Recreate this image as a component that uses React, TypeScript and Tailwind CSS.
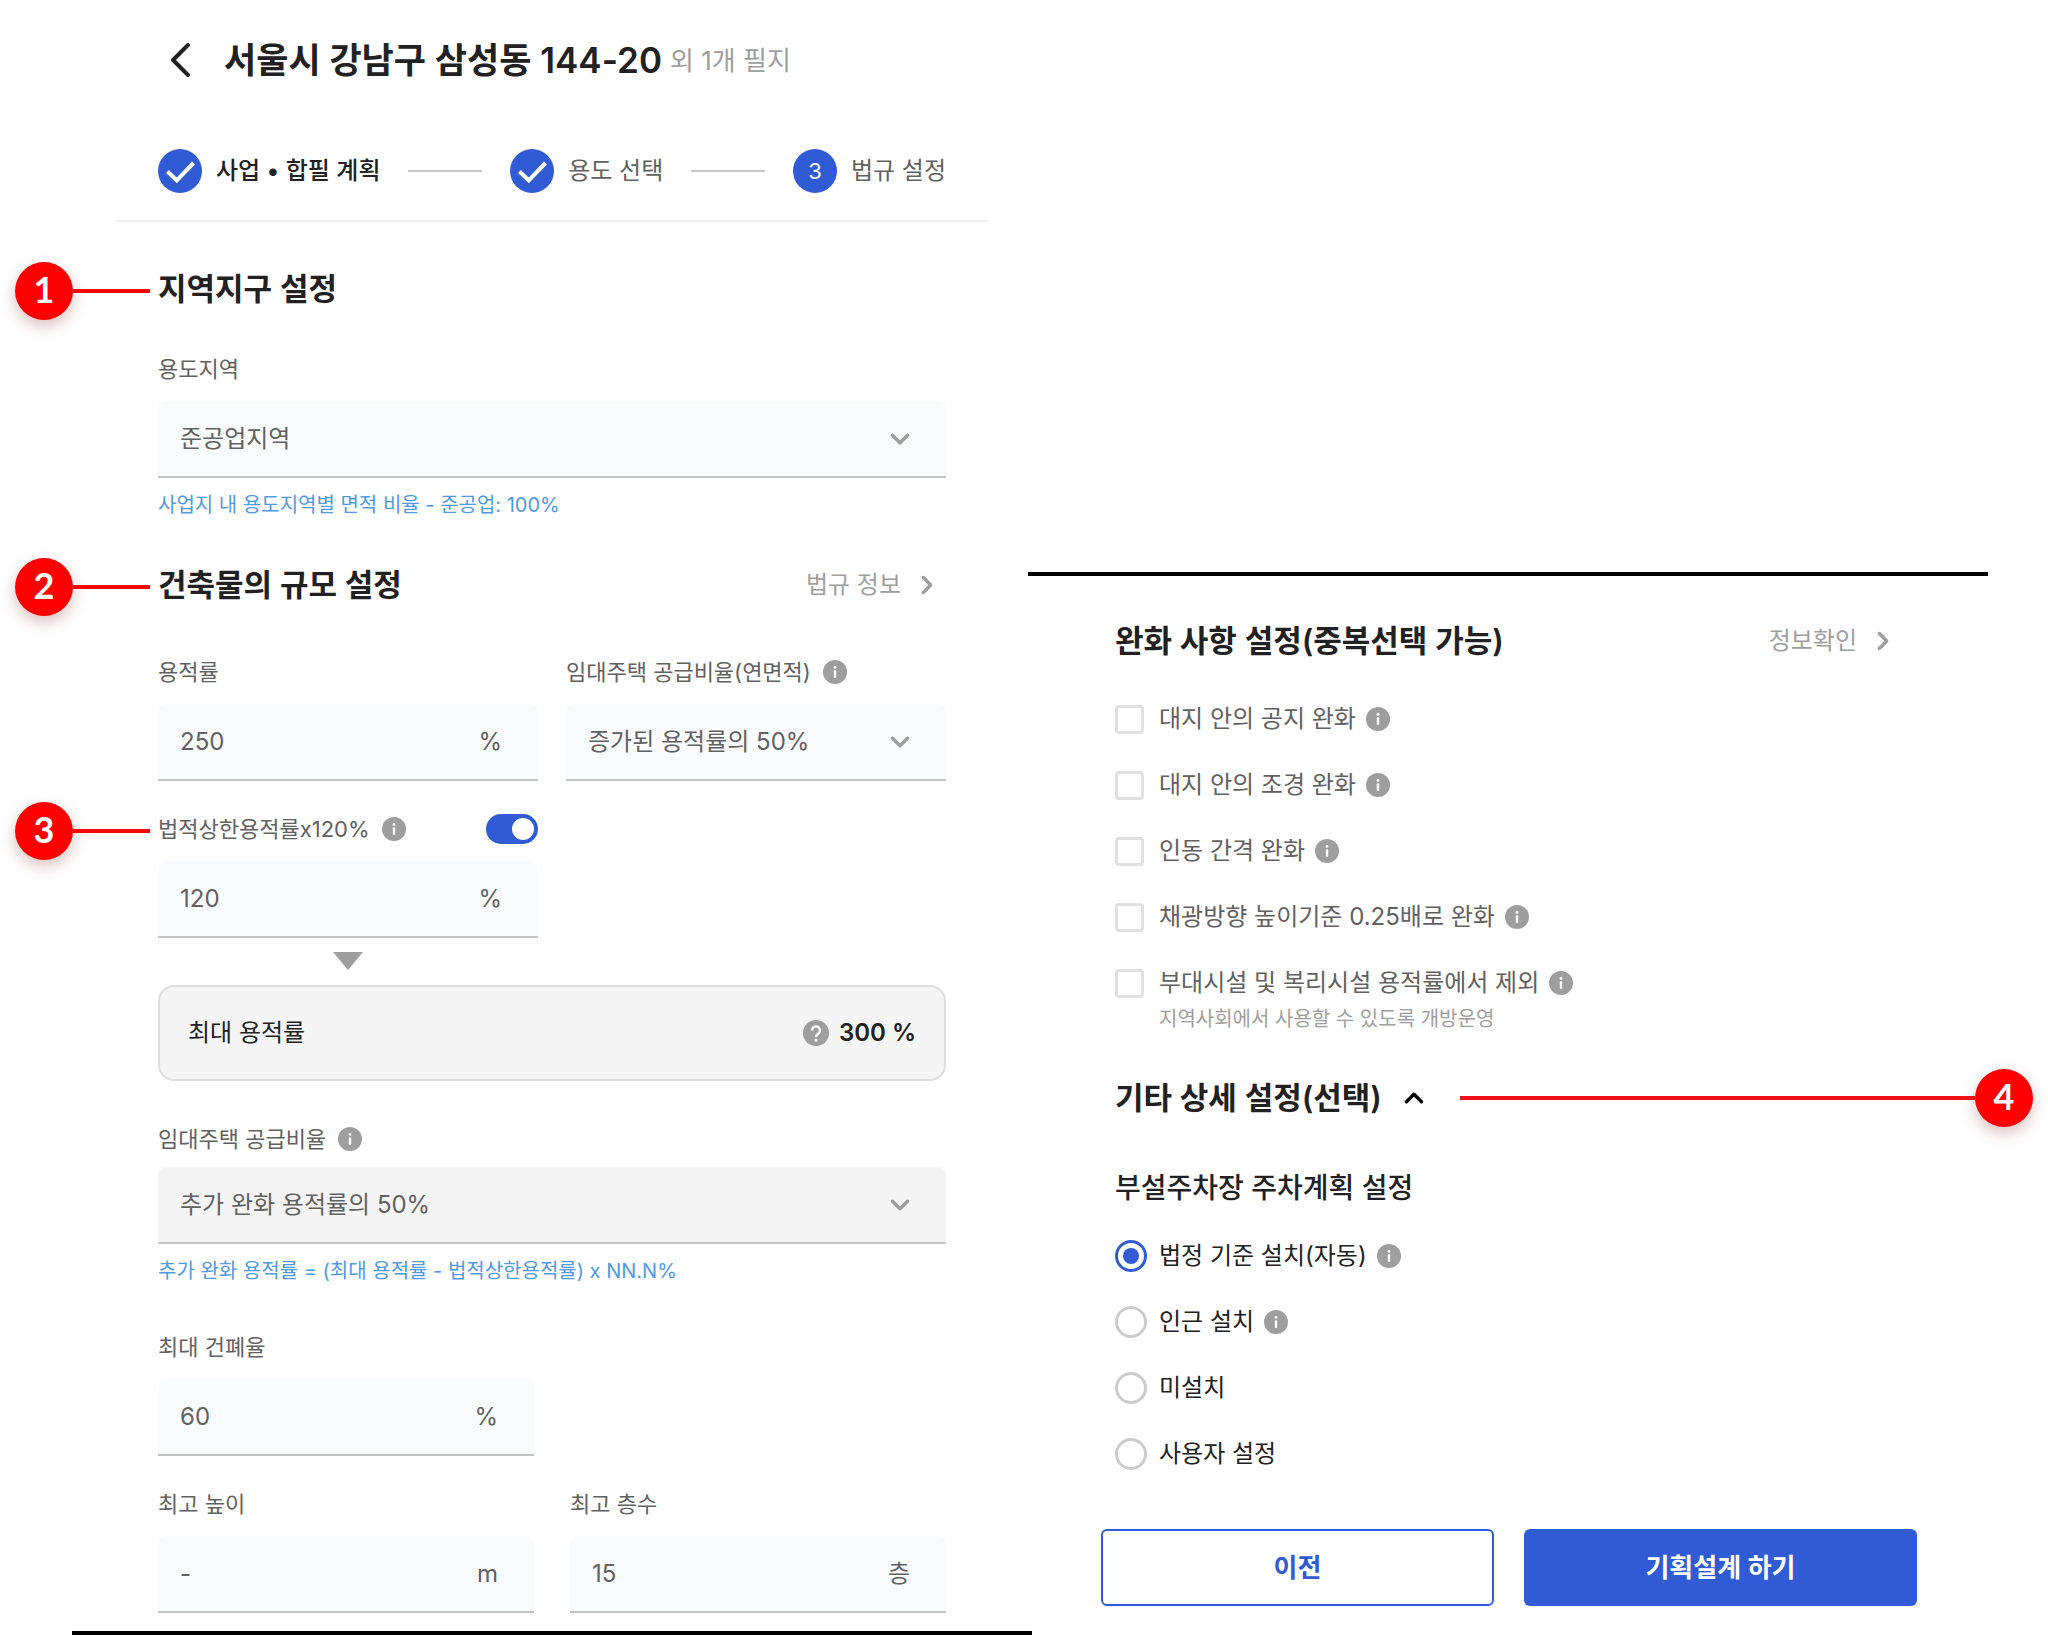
import { useState, type ReactNode } from 'react';
import clsx from 'clsx';

const STEPS = [
  { label: '사업 • 합필 계획', done: true },
  { label: '용도 선택', done: true },
  { label: '법규 설정', done: false },
];

const RELAXATIONS = [
  { id: 'open-space', label: '대지 안의 공지 완화' },
  { id: 'landscape', label: '대지 안의 조경 완화' },
  { id: 'distance', label: '인동 간격 완화' },
  { id: 'daylight', label: '채광방향 높이기준 0.25배로 완화' },
  { id: 'facilities', label: '부대시설 및 복리시설 용적률에서 제외', note: '지역사회에서 사용할 수 있도록 개방운영' },
];

const PARKING_OPTIONS = [
  { id: 'legal', label: '법정 기준 설치(자동)', info: true },
  { id: 'nearby', label: '인근 설치', info: true },
  { id: 'none', label: '미설치', info: false },
  { id: 'custom', label: '사용자 설정', info: false },
];

function Chevron({ className }: { className?: string }) {
  return (
    <svg viewBox="0 0 24 24" className={clsx('size-6 shrink-0', className)} fill="none" stroke="currentColor" strokeWidth="3.4" strokeLinecap="round" strokeLinejoin="round">
      <path d="M4.5 8.3 12 15.7l7.500-7.400" />
    </svg>
  );
}

function InfoIcon() {
  return (
    <svg viewBox="0 0 24 24" className="size-6 shrink-0">
      <circle cx="12" cy="12" r="12" fill="#9e9e9e" />
      <circle cx="12" cy="7.4" r="1.4" fill="#fff" />
      <rect x="10.8" y="10.3" width="2.4" height="7.6" rx="1" fill="#fff" />
    </svg>
  );
}

function HelpIcon() {
  return (
    <svg viewBox="0 0 26 26" className="size-[26px] shrink-0">
      <circle cx="13" cy="13" r="13" fill="#9e9e9e" />
      <path d="M9 10.400a4 4 0 1 1 6.500 3.100c-1.500 1.100-2.500 1.500-2.500 3.300" fill="none" stroke="#fff" strokeWidth="2.400" />
      <circle cx="13" cy="20" r="1.500" fill="#fff" />
    </svg>
  );
}

function Badge({ n }: { n: number }) {
  return (
    <span className="flex size-[58px] shrink-0 items-center justify-center rounded-full bg-[#ff0000] pb-1 font-['Lato',sans-serif] text-4xl font-bold text-white shadow-[0_6px_16px_rgba(120,0,0,0.25)]">
      {n}
    </span>
  );
}

// numbered marker hanging in the left gutter
function Callout({ n }: { n: number }) {
  return (
    <span className="absolute top-1/2 right-full -mt-[27px] mr-2 flex items-center">
      <Badge n={n} />
      <span className="h-1 w-[77px] bg-[#ff0000]" />
    </span>
  );
}

function SectionTitle({ children }: { children: ReactNode }) {
  return <h2 className="text-[31px] leading-10 font-semibold text-[#212121]">{children}</h2>;
}

function MoreLink({ children }: { children: ReactNode }) {
  return (
    <a href="#" className="flex items-center gap-3.5 pr-[7px] text-2xl leading-8 text-[#9e9e9e]">
      {children}
      <Chevron className="-rotate-90" />
    </a>
  );
}

function FieldLabel({ htmlFor, info, children }: { htmlFor: string; info?: boolean; children: ReactNode }) {
  return (
    <div className="flex items-center gap-3">
      <label htmlFor={htmlFor} className="text-[22px] leading-8 text-[#616161]">
        {children}
      </label>
      {info && <InfoIcon />}
    </div>
  );
}

function NumberField({ id, value, unit }: { id: string; value: string; unit: string }) {
  return (
    <div className="mt-4 flex h-[77px] items-center rounded-t-lg border-b-2 border-[#c2c4c6] bg-[#fafbfd] pr-9 pl-[22px] text-2xl text-[#616161]">
      <input id={id} type="text" defaultValue={value} className="w-full min-w-0 flex-1 bg-transparent outline-none" />
      <span>{unit}</span>
    </div>
  );
}

function SelectField({ id, value, muted }: { id: string; value: string; muted?: boolean }) {
  return (
    <div className={clsx('relative h-[77px] rounded-t-lg border-b-2 border-[#c2c4c6]', muted ? 'mt-3 bg-[#f5f5f5]' : 'mt-4 bg-[#fafbfd]')}>
      <select id={id} className="size-full appearance-none bg-transparent pr-16 pl-[22px] text-2xl text-[#616161] outline-none">
        <option>{value}</option>
      </select>
      <Chevron className="pointer-events-none absolute top-1/2 right-[34px] -translate-y-1/2 text-[#9e9e9e]" />
    </div>
  );
}

function Helper({ children }: { children: ReactNode }) {
  return <p className="mt-[11px] text-xl leading-8 text-[#4f9ae2]">{children}</p>;
}

function Header() {
  return (
    <header className="mx-11 border-b-2 border-[#eeeeee] px-[42px] pt-8 pb-[27px]">
      <div className="flex h-14 items-center">
        <button type="button" aria-label="뒤로" className="mr-[22px] ml-2">
          <svg viewBox="0 0 36 36" className="size-9" fill="none" stroke="#212121" strokeWidth="4" strokeLinecap="round" strokeLinejoin="round">
            <path d="M22 3 7 18l15 15" />
          </svg>
        </button>
        <h1 className="text-[35px] font-semibold text-[#212121]">서울시 강남구 삼성동 144-20</h1>
        <span className="ml-2 text-[26px] text-[#9e9e9e]">외 1개 필지</span>
      </div>
      <ol className="mt-[61px] flex items-center">
        {STEPS.map((step, i) => (
          <li key={step.label} className={clsx('flex items-center', i > 0 && 'flex-1')}>
            {i > 0 && <span className="mx-7 h-0.5 flex-1 bg-[#c6c6c6]" />}
            <span className="flex size-11 items-center justify-center rounded-full bg-[#305bd4] text-[22px] text-white">
              {step.done ? (
                <svg viewBox="0 0 44 44" className="size-11" fill="none" stroke="#fff" strokeWidth="4">
                  <path d="M9.500 22.500 18.800 31.500 35.500 14" />
                </svg>
              ) : (
                i + 1
              )}
            </span>
            <span className={clsx('ml-3.5 text-2xl', i === 0 ? 'font-medium text-[#212121]' : 'text-[#616161]')}>{step.label}</span>
          </li>
        ))}
      </ol>
    </header>
  );
}

function ZoneSection() {
  return (
    <section className="mt-[47px]">
      <div className="relative">
        <Callout n={1} />
        <SectionTitle>지역지구 설정</SectionTitle>
      </div>
      <div className="mt-11">
        <FieldLabel htmlFor="zone">용도지역</FieldLabel>
        <SelectField id="zone" value="준공업지역" />
        <Helper>사업지 내 용도지역별 면적 비율 - 준공업: 100%</Helper>
      </div>
    </section>
  );
}

function ScaleSection() {
  const [bonus, setBonus] = useState(true);

  return (
    <section className="mt-11">
      <div className="relative flex items-center justify-between">
        <Callout n={2} />
        <SectionTitle>건축물의 규모 설정</SectionTitle>
        <MoreLink>법규 정보</MoreLink>
      </div>

      <div className="mt-[51px] grid grid-cols-2 gap-x-7 gap-y-8">
        <div>
          <FieldLabel htmlFor="far">용적률</FieldLabel>
          <NumberField id="far" value="250" unit="%" />
        </div>
        <div>
          <FieldLabel htmlFor="rental-area" info>임대주택 공급비율(연면적)</FieldLabel>
          <SelectField id="rental-area" value="증가된 용적률의 50%" />
        </div>
        <div>
          <div className="relative flex items-center justify-between">
            <Callout n={3} />
            <FieldLabel htmlFor="far-bonus" info>법적상한용적률x120%</FieldLabel>
            <input
              type="checkbox"
              role="switch"
              aria-label="법적상한용적률 적용"
              checked={bonus}
              onChange={(e) => setBonus(e.target.checked)}
              className="flex h-[30px] w-[52px] appearance-none items-center rounded-full bg-[#bdbdbd] px-1 before:size-[22px] before:rounded-full before:bg-white checked:justify-end checked:bg-[#305bd4]"
            />
          </div>
          <NumberField id="far-bonus" value="120" unit="%" />
        </div>
      </div>

      <svg viewBox="0 0 30 18" className="mt-3.5 ml-[175px] h-[18px] w-[30px]">
        <path d="M0 0h30L15 18z" fill="#9e9e9e" />
      </svg>
      <div className="mt-[15px] flex h-24 items-center justify-between rounded-2xl border-2 border-[#dddddd] bg-[#f5f5f5] px-7 text-2xl text-[#212121]">
        <span>최대 용적률</span>
        <span className="flex items-center gap-2.5 font-semibold">
          <HelpIcon />
          300 %
        </span>
      </div>

      <div className="mt-[42px]">
        <FieldLabel htmlFor="rental" info>임대주택 공급비율</FieldLabel>
        <SelectField id="rental" value="추가 완화 용적률의 50%" muted />
        <Helper>추가 완화 용적률 = (최대 용적률 - 법적상한용적률) x NN.N%</Helper>
      </div>

      <div className="mt-11 grid grid-cols-2 gap-x-9 gap-y-8">
        <div className="col-span-2 grid grid-cols-2 gap-x-9">
          <div>
            <FieldLabel htmlFor="bcr">최대 건폐율</FieldLabel>
            <NumberField id="bcr" value="60" unit="%" />
          </div>
        </div>
        <div>
          <FieldLabel htmlFor="height">최고 높이</FieldLabel>
          <NumberField id="height" value="-" unit="m" />
        </div>
        <div>
          <FieldLabel htmlFor="floors">최고 층수</FieldLabel>
          <NumberField id="floors" value="15" unit="층" />
        </div>
      </div>
    </section>
  );
}

function RelaxationSection() {
  return (
    <section className="mt-[45px] pr-[146px] pl-[87px]">
      <div className="flex items-center justify-between">
        <SectionTitle>완화 사항 설정(중복선택 가능)</SectionTitle>
        <MoreLink>정보확인</MoreLink>
      </div>
      <ul className="mt-[42px] flex flex-col gap-[34px]">
        {RELAXATIONS.map((item) => (
          <li key={item.id}>
            <div className="flex items-center">
              <input id={item.id} type="checkbox" className="size-[29px] appearance-none rounded-sm border-3 border-[#e0e0e0] checked:bg-[#305bd4]" />
              <label htmlFor={item.id} className="mr-2.5 ml-[15px] text-2xl leading-8 text-[#616161]">
                {item.label}
              </label>
              <InfoIcon />
            </div>
            {item.note && <p className="mt-1.5 ml-11 text-xl leading-7 text-[#9e9e9e]">{item.note}</p>}
          </li>
        ))}
      </ul>
    </section>
  );
}

function DetailSection() {
  const [parking, setParking] = useState('legal');

  return (
    <section className="mt-9 pl-[87px]">
      <div className="flex items-center pr-[15px]">
        <SectionTitle>
          <button type="button" className="flex items-center gap-5">
            기타 상세 설정(선택)
            <Chevron className="rotate-180 text-black" />
          </button>
        </SectionTitle>
        <span className="ml-[34px] h-1 flex-1 bg-[#f0101a]" />
        <Badge n={4} />
      </div>

      <fieldset className="mt-[43px]">
        <legend className="text-[28px] leading-9 font-medium text-[#212121]">부설주차장 주차계획 설정</legend>
        <div className="mt-[34px] flex flex-col gap-[34px]">
          {PARKING_OPTIONS.map((option) => (
            <div key={option.id} className="flex items-center">
              <input
                id={option.id}
                type="radio"
                name="parking"
                checked={parking === option.id}
                onChange={() => setParking(option.id)}
                className="flex size-8 appearance-none items-center justify-center rounded-full border-3 border-[#cccccc] checked:border-[#305bd4] checked:before:size-4 checked:before:rounded-full checked:before:bg-[#305bd4]"
              />
              <label htmlFor={option.id} className="mr-2.5 ml-3 text-2xl leading-8 text-[#212121]">
                {option.label}
              </label>
              {option.info && <InfoIcon />}
            </div>
          ))}
        </div>
      </fieldset>
    </section>
  );
}

export default function App() {
  return (
    <main className="grid min-h-screen grid-cols-2 bg-white font-['Inter','Noto_Sans_CJK_KR',sans-serif]">
      <div className="-mr-2 ml-[72px] border-b-4 border-black">
        <Header />
        <div className="px-[86px] pb-[18px]">
          <ZoneSection />
          <ScaleSection />
        </div>
      </div>

      <div className="ml-1 flex flex-col justify-end pb-[29px]">
        <hr className="mr-[60px] border-t-4 border-black" />
        <RelaxationSection />
        <DetailSection />
        <div className="mt-[59px] mr-[131px] ml-[73px] grid grid-cols-2 gap-[30px] text-[26px] font-semibold">
          <button type="button" className="h-[77px] rounded-md border-2 border-[#305bd4] text-[#305bd4]">
            이전
          </button>
          <button type="button" className="h-[77px] rounded-md bg-[#305bd4] text-white">
            기획설계 하기
          </button>
        </div>
      </div>
    </main>
  );
}
